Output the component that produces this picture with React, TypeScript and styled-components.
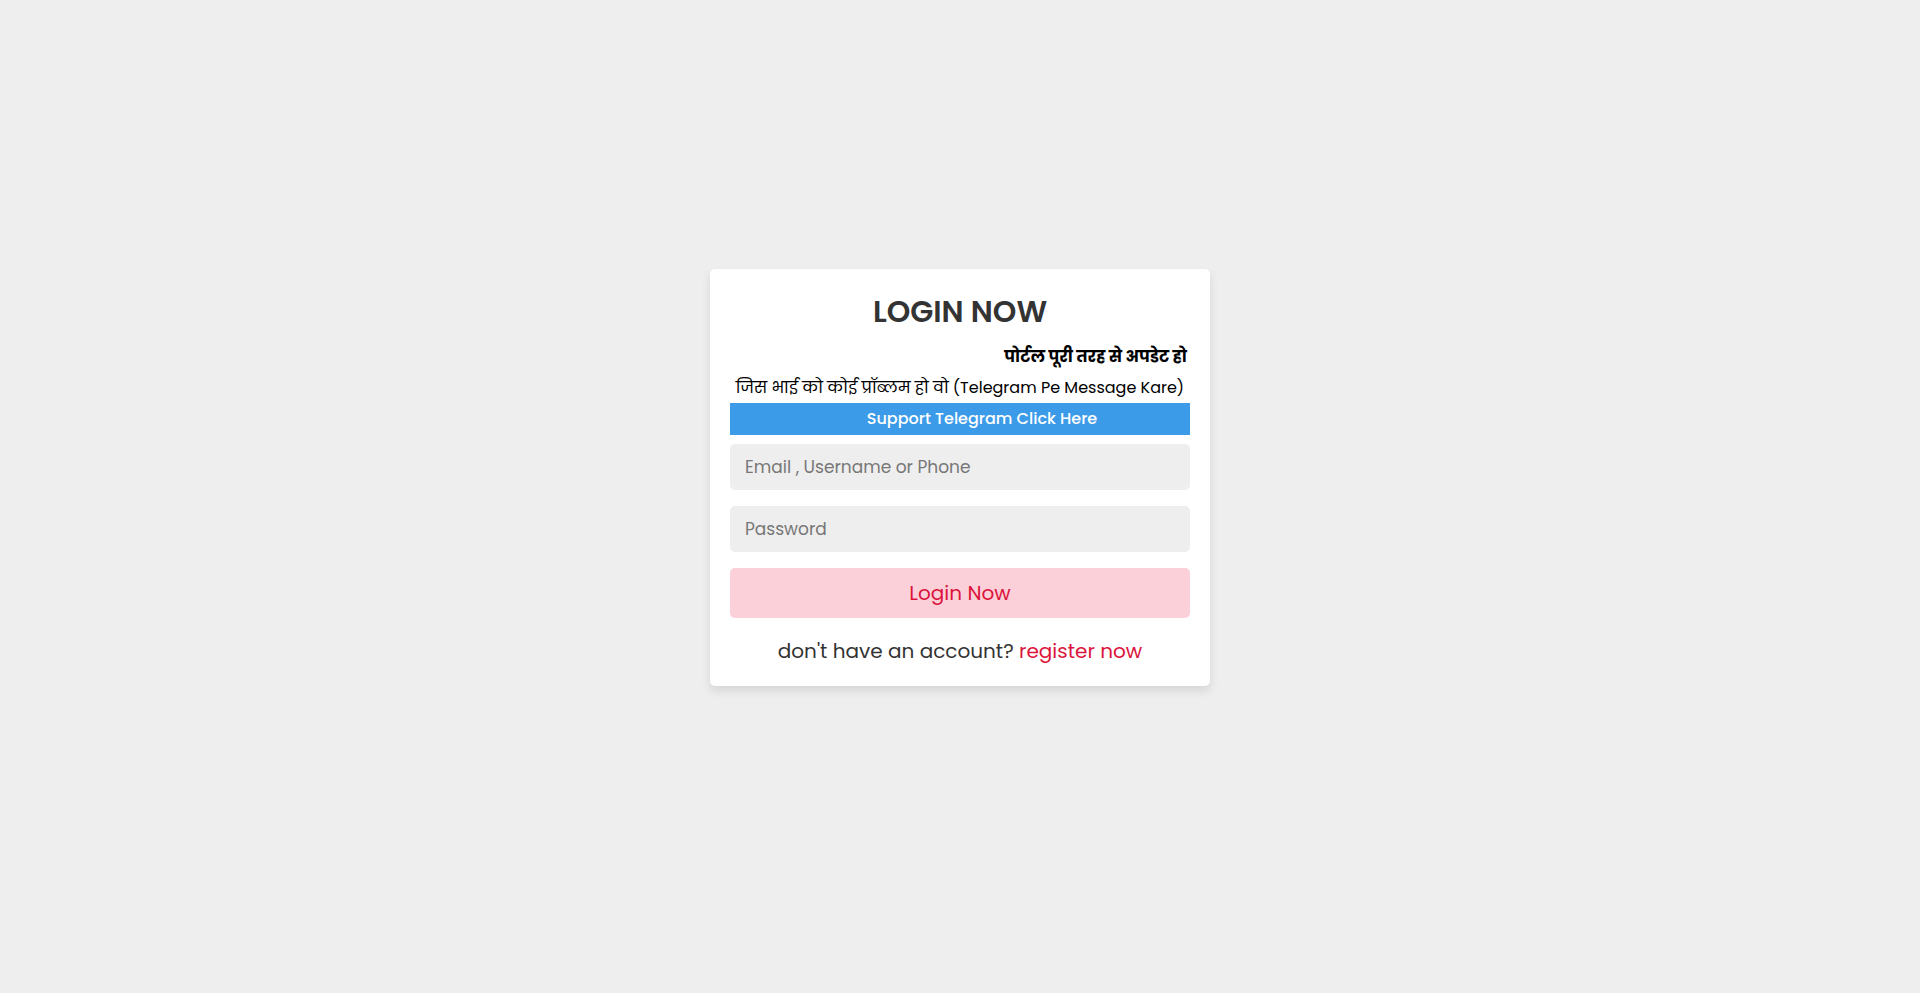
import styled, { createGlobalStyle } from "styled-components";

const GlobalStyle = createGlobalStyle`
	* {
		box-sizing: border-box;
		margin: 0;
		padding: 0;
	}

	body {
		background: #eeeeee;
		font-family: "Poppins", "Noto Sans", "Noto Sans Devanagari", sans-serif;
	}
`;

const Page = styled.div`
	min-height: 100vh;
	display: flex;
	justify-content: center;
	align-items: center;
	padding-bottom: 38px;
`;

const Card = styled.form`
	width: 500px;
	padding: 20px;
	background: #fff;
	border-radius: 5px;
	box-shadow: 0 5px 10px rgba(0, 0, 0, 0.1);
	text-align: center;
`;

const Title = styled.h3`
	font-size: 30px;
	font-weight: 600;
	line-height: 36px;
	color: #333;
	text-transform: uppercase;
	margin-top: 5px;
	margin-bottom: 11px;
`;

const Notice = styled.p<{ $bold?: boolean; $align?: string }>`
	font-size: 16px;
	font-weight: ${(p) => (p.$bold ? 700 : 400)};
	text-align: ${(p) => p.$align || "center"};
	color: #000;
	line-height: ${(p) => (p.$bold ? "32px" : "30px")};
	padding-right: ${(p) => (p.$bold ? "3px" : "0")};
	white-space: nowrap;
`;

const TelegramBar = styled.a`
	display: block;
	height: 32px;
	line-height: 32px;
	background: #3c9be8;
	color: #fff;
	font-size: 16px;
	font-weight: 500;
	text-decoration: none;
	padding-left: 44px;
	margin-bottom: 9px;
`;

const Field = styled.input`
	display: block;
	width: 100%;
	height: 46px;
	border: none;
	outline: none;
	border-radius: 5px;
	background: #eeeeee;
	padding: 0 15px;
	font-family: inherit;
	font-size: 17px;
	color: #333;
	margin-bottom: 16px;

	&::placeholder {
		color: #777;
	}
`;

const SubmitButton = styled.button`
	display: block;
	width: 100%;
	height: 50px;
	border: none;
	border-radius: 5px;
	background: #fbd0d9;
	color: crimson;
	font-family: inherit;
	font-size: 20px;
	cursor: pointer;
`;

const Footer = styled.p`
	margin-top: 18px;
	font-size: 20px;
	line-height: 30px;
	color: #333;

	a {
		color: crimson;
		text-decoration: none;
	}
`;

export default function App() {
	return (
		<>
			<GlobalStyle />
			<Page>
				<Card onSubmit={(e) => e.preventDefault()}>
					<Title>Login Now</Title>
					<Notice $bold $align="right">
						पोर्टल पूरी तरह से अपडेट हो
					</Notice>
					<Notice>जिस भाई को कोई प्रॉब्लम हो वो (Telegram Pe Message Kare)</Notice>
					<TelegramBar href="#">Support Telegram Click Here</TelegramBar>
					<Field type="text" placeholder="Email , Username or Phone" />
					<Field type="password" placeholder="Password" />
					<SubmitButton type="submit">Login Now</SubmitButton>
					<Footer>
						don't have an account? <a href="#">register now</a>
					</Footer>
				</Card>
			</Page>
		</>
	);
}
